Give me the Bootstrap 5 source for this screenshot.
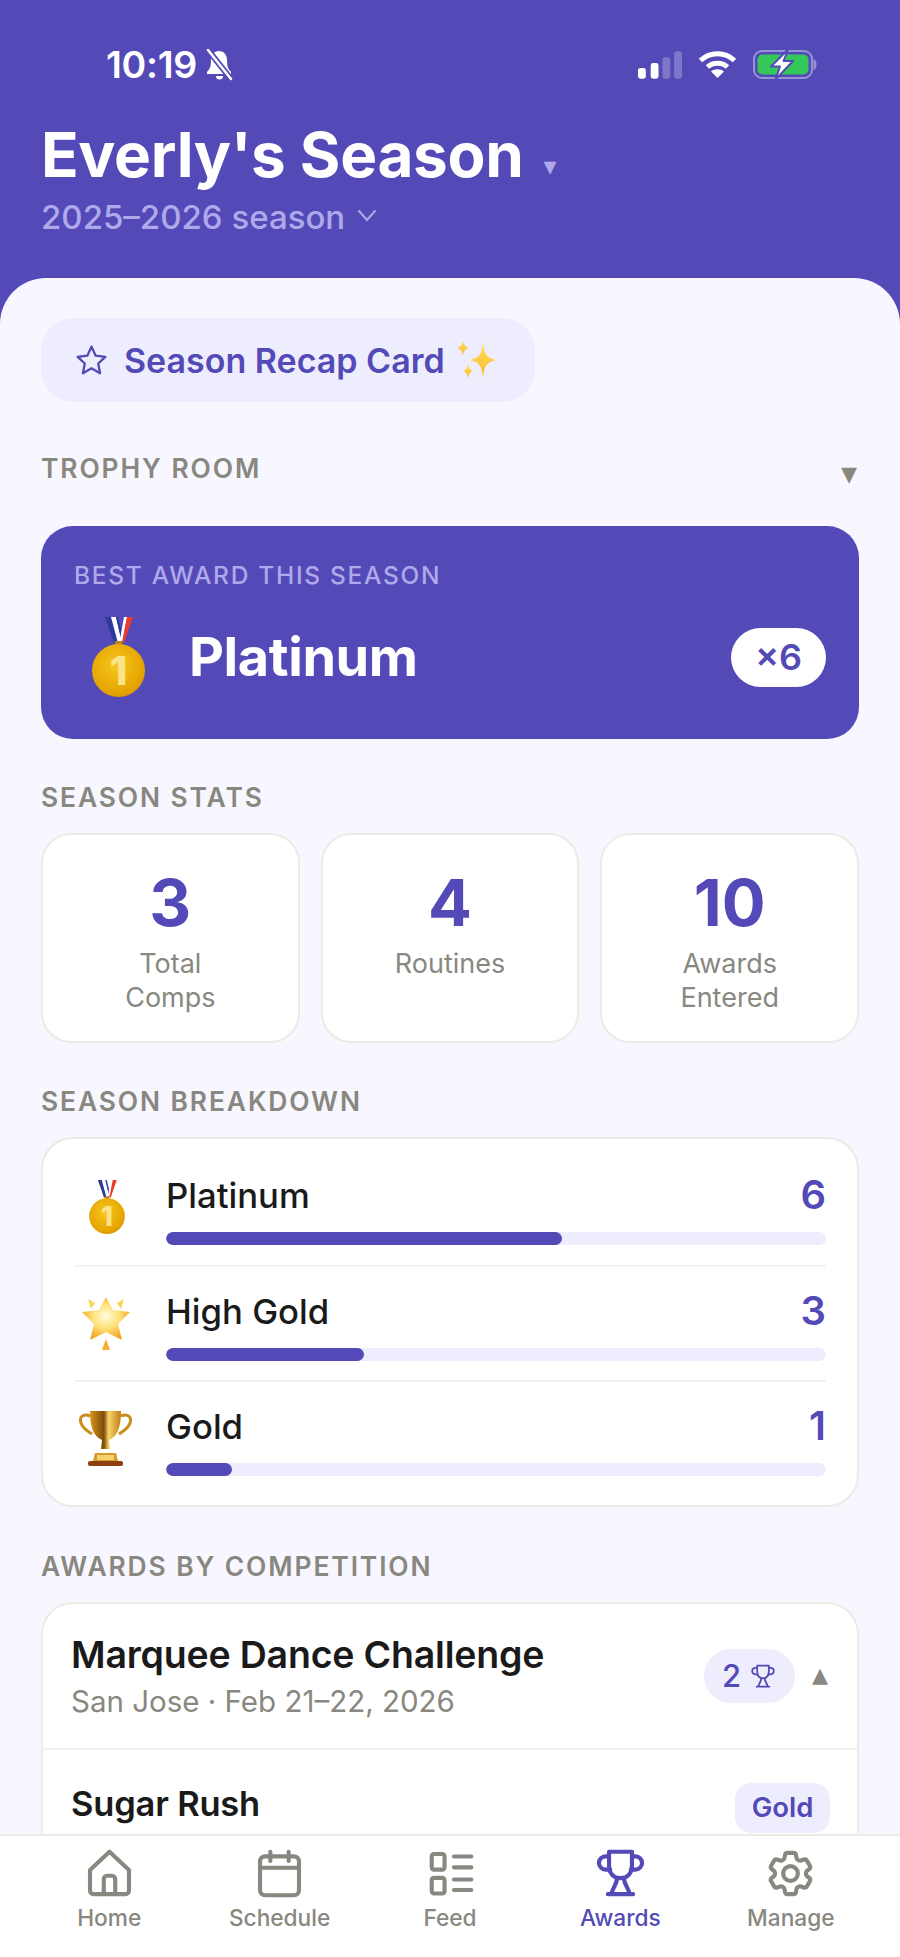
<!DOCTYPE html>
<html lang="en">
<head>
    <meta charset="UTF-8">
    <meta name="viewport" content="width=device-width, initial-scale=1">
    <title>Everly's Season</title>
    <link href="https://cdn.jsdelivr.net/npm/bootstrap@5.3.0/dist/css/bootstrap.min.css" rel="stylesheet">
    <style>
        body { font-family: Inter, "Liberation Sans", sans-serif; background: #534ab7; color: #1a1a1a; }
        .app-shell { height: 1957px; background: #534ab7; }

        .status-row { height: 53px; margin-top: 38px; padding: 0 83px 0 106px; color: #fff; }
        .status-time { font-size: 37.5px; font-weight: 600; line-height: 30px; letter-spacing: -.3px; }
        .hero-head { padding: 28px 41px 0; height: 187px; }
        .hero-title { font-size: 62px; font-weight: 700; line-height: 72px; letter-spacing: -.3px; color: #fff; margin: 0; }
        .title-caret { font-family: "DejaVu Sans", sans-serif; font-size: 26px; color: #afa9ec; margin-left: 20px; letter-spacing: 0; vertical-align: 2px; }
        .hero-season { font-size: 33px; font-weight: 500; line-height: 36px; color: #afa9ec; margin-top: -3px; }
        .season-chev { margin: 0 0 5px 12px; }

        .sheet { background: #f8f7ff; border-radius: 46px 46px 0 0; padding: 40px 41px 0; height: 1679px; }
        .recap-btn { background: #eeedfe; color: #534ab7; border: 0; border-radius: 32px; height: 84px; width: 494px; padding: 0 0 0 32px; font-size: 34px; font-weight: 600; }
        .recap-text { margin: 0 12px 0 14px; }
        .sec-label { font-size: 26.4px; font-weight: 600; letter-spacing: 1.9px; color: #888780; line-height: 30px; text-transform: uppercase; }
        .sec-caret { font-family: "DejaVu Sans", sans-serif; font-size: 32px; line-height: 30px; color: #888780; margin: 10px 2px 0 0; }
        .trophy-head { margin-top: 51px; height: 30px; }

        .best-card { background: #534ab7; color: #fff; border: 0; border-radius: 32px; height: 213px; margin-top: 43px; padding: 34px 33px 0; }
        .best-label { font-size: 24.5px; font-weight: 500; letter-spacing: 1.7px; line-height: 30px; color: #afa9ec; }
        .best-row { margin-top: 27px; }
        .best-medal { margin: 0 44px 0 18px; }
        .best-name { font-size: 54px; font-weight: 700; line-height: 64px; letter-spacing: -.4px; }
        .best-count { background: #fff; color: #534ab7; border-radius: 30px; width: 95px; height: 59px; font-size: 36px; font-weight: 600; }

        .stat-tile { background: #fff; border: 2px solid #ecebe5; border-radius: 30px; height: 210px; padding-top: 28px; }
        .stat-num { font-size: 65px; font-weight: 700; line-height: 80px; margin-bottom: 4px; color: #534ab7; }
        .stat-cap { font-size: 27px; line-height: 34px; color: #888780; }
        .stat-grid { gap: 21px; margin-top: 21px; }

        .panel-box { background: #fff; border: 2px solid #ecebe5; border-radius: 32px; }
        .breakdown-box { height: 370px; margin-top: 21px; padding: 0 31px; }
        .award-row { height: 115px; gap: 0; }
        .award-row + .award-row { border-top: 2px solid #f3f2ed; }
        .award-icon { width: 92px; }
        .award-body { padding-top: 4px; }
        .award-name { font-size: 34.7px; font-weight: 500; line-height: 42px; }
        .award-num { font-size: 40px; font-weight: 600; line-height: 42px; color: #534ab7; }
        .award-track { height: 13px; background: #eeedfe; border-radius: 7px; margin-top: 16px; }
        .award-track .progress-bar { background: #534ab7; border-radius: 7px; }

        .comp-box { margin-top: 21px; height: 400px; border-bottom: 0; border-radius: 32px 32px 0 0; }
        .comp-head { height: 146px; padding: 0 27px 0 28px; border-bottom: 2px solid #f3f2ed; }
        .comp-title { font-size: 37.5px; font-weight: 600; line-height: 44px; letter-spacing: -.2px; }
        .comp-sub { font-size: 29.5px; line-height: 36px; margin-top: 6px; color: #888780; }
        .comp-pill { background: #eeedfe; color: #534ab7; width: 91px; height: 54px; border-radius: 27px; font-size: 31px; font-weight: 500; gap: 8px; }
        .comp-caret { font-family: "DejaVu Sans", sans-serif; font-size: 32px; line-height: 36px; color: #888780; margin: 0 2px 4px 17px; }
        .routine-row { padding: 33px 27px 0 28px; }
        .routine-name { font-size: 34.5px; font-weight: 600; line-height: 50px; letter-spacing: -.2px; margin-top: -4px; }
        .routine-tag { background: #eeedfe; color: #534ab7; border-radius: 16px; width: 95px; height: 50px; font-size: 27.5px; font-weight: 600; }

        .tab-strip { bottom: 0; left: 0; height: 123px; background: #fff; border-top: 2px solid #ecebe5; padding: 10px 24px 0; }
        .tab-cell { color: #888780; font-size: 22.7px; font-weight: 500; line-height: 28px; }
        .tab-cell.is-on { color: #534ab7; }
        .tab-cell svg { width: 55px; height: 55px; margin-bottom: 3px; }
        .ln { fill: none; stroke: currentColor; stroke-width: 1.8; stroke-linecap: round; stroke-linejoin: round; }
    </style>
</head>
<body>

<div class="app-shell position-relative overflow-hidden">

    <div class="status-row d-flex justify-content-between align-items-center">
        <div class="d-flex align-items-center gap-2">
            <span class="status-time">10:19</span>
            <svg width="29" height="32" viewBox="0 0 29 32">
                <path d="M14 2c-5 0-8 4-8 9 0 6-1 9-4 12v2h24v-2c-3-3-4-6-4-12 0-5-3-9-8-9z" fill="#fff"/>
                <path d="M11 27h7a3.5 3.5 0 0 1-7 0z" fill="#fff"/>
                <path d="M3 1l23 29" stroke="#534ab7" stroke-width="6"/>
                <path d="M3 1l23 29" stroke="#fff" stroke-width="2.5" stroke-linecap="round"/>
            </svg>
        </div>
        <div class="d-flex align-items-center">
            <svg width="44" height="28" viewBox="0 0 45 28" fill="#fff">
                <rect x="0" y="17" width="8" height="11" rx="2.5"/>
                <rect x="13" y="12" width="8" height="16" rx="2.5"/>
                <rect x="25" y="6" width="8" height="22" rx="2.5" opacity=".25"/>
                <rect x="37" y="0" width="8" height="28" rx="2.5" opacity=".25"/>
            </svg>
            <svg class="ms-3" width="39" height="29" viewBox="0 0 39 29" fill="none" stroke="#fff" stroke-width="5">
                <path d="M2.5 10.5c9.5-9 24.500-9 34 0"/>
                <path d="M9.500 17c5.500-5 14.500-5 20 0"/>
                <path d="M19.500 28l-6.500-6.500c3.500-3 9.500-3 13 0z" fill="#fff" stroke="none"/>
            </svg>
            <svg class="ms-3" width="64" height="31" viewBox="0 0 64 31">
                <rect x="1" y="2" width="58" height="27" rx="8" fill="none" stroke="#fff" stroke-opacity=".4" stroke-width="2"/>
                <rect x="4.500" y="5.500" width="51" height="20" rx="5" fill="#34c759"/>
                <path d="M60.500 10c2 1 3 2.500 3 5.500s-1 4.500-3 5.500z" fill="#fff" fill-opacity=".4"/>
                <path d="M35 .5L18 17.500h9L22.500 30.500 40 12H30.500z" fill="#fff" stroke="#534ab7" stroke-width="2" stroke-linejoin="round"/>
            </svg>
        </div>
    </div>

    <div class="hero-head">
        <h1 class="hero-title">Everly's Season<span class="title-caret">▾</span></h1>
        <div class="hero-season d-flex align-items-center">2025–2026 season
            <svg class="season-chev" width="20" height="14" viewBox="0 0 20 14" fill="none" stroke="#afa9ec" stroke-width="2" stroke-linecap="round"><path d="M2 3l8 9 8-9"/></svg>
        </div>
    </div>

    <div class="sheet">
        <button type="button" class="recap-btn btn d-flex align-items-center">
            <svg width="37" height="37" viewBox="0 0 16 16" fill="none" stroke="#534ab7" stroke-width="1" stroke-linejoin="round"><path d="M8 2l1.800 3.900 4.200.5-3.100 2.900.8 4.200L8 11.400l-3.700 2.100.8-4.200L2 6.400l4.200-.5z"/></svg>
            <span class="recap-text">Season Recap Card</span>
            <svg width="40" height="40" viewBox="0 0 40 40">
                <defs><linearGradient id="spk" x1="0" y1="0" x2="0" y2="1"><stop offset="0" stop-color="#ffe25a"/><stop offset="1" stop-color="#fcb72b"/></linearGradient></defs>
                <path d="M26 2c1 11 3 16 13 18-10 2-12 7-13 18-1-11-3-16-13-18 10-2 12-7 13-18z" fill="url(#spk)"/>
                <path d="M6 0c.5 4 1.500 6 5.500 8-4 2-5 4-5.500 8-.5-4-1.500-6-5.500-8 4-2 5-4 5.500-8z" fill="url(#spk)"/>
                <path d="M11 24c.4 3 1.200 5 4.500 7-3.300 2-4.100 4-4.500 8-.4-4-1.200-6-4.500-8 3.300-2 4.100-4 4.500-7z" fill="url(#spk)"/>
            </svg>
        </button>

        <div class="trophy-head d-flex justify-content-between align-items-center">
            <span class="sec-label">Trophy Room</span>
            <span class="sec-caret">▾</span>
        </div>

        <div class="best-card card">
            <div class="best-label">BEST AWARD THIS SEASON</div>
            <div class="best-row d-flex align-items-center">
                <svg class="best-medal" width="53" height="80" viewBox="0 0 53 80">
                    <defs>
                        <radialGradient id="gold1" cx=".45" cy=".4" r=".7"><stop offset="0" stop-color="#f7c81e"/><stop offset=".75" stop-color="#e5a400"/><stop offset="1" stop-color="#c88a00"/></radialGradient>
                    </defs>
                    <path d="M13 0h6l7 26h-4z" fill="#2b3a9b"/>
                    <path d="M19 0h5l6 26h-4z" fill="#fff"/>
                    <path d="M24 0h2l5 20-1 6z" fill="#2b3a9b"/>
                    <path d="M32 0h3l-5 26-2-4z" fill="#fff"/>
                    <path d="M35 0h6l-9 26h-2z" fill="#ea3b2e"/>
                    <rect x="23" y="24" width="7" height="5" fill="#b98a20"/>
                    <circle cx="26.500" cy="53.500" r="26.500" fill="url(#gold1)"/>
                    <text x="26.500" y="68" text-anchor="middle" font-family="Inter" font-weight="800" font-size="40" fill="#fbe38a">1</text>
                </svg>
                <span class="best-name flex-grow-1">Platinum</span>
                <span class="best-count d-flex align-items-center justify-content-center">×6</span>
            </div>
        </div>

        <div class="sec-label" style="margin-top:43px">Season Stats</div>
        <div class="stat-grid d-flex">
            <div class="stat-tile flex-fill w-100 text-center"><div class="stat-num">3</div><div class="stat-cap">Total<br>Comps</div></div>
            <div class="stat-tile flex-fill w-100 text-center"><div class="stat-num">4</div><div class="stat-cap">Routines</div></div>
            <div class="stat-tile flex-fill w-100 text-center"><div class="stat-num">10</div><div class="stat-cap">Awards<br>Entered</div></div>
        </div>

        <div class="sec-label" style="margin-top:43px">Season Breakdown</div>
        <div class="breakdown-box panel-box d-flex flex-column justify-content-center">
            <div class="award-row d-flex align-items-center">
                <div class="award-icon">
                    <svg class="d-block" style="margin-left:15px" width="36" height="54" viewBox="0 0 53 80">
                        <path d="M13 0h6l7 26h-4z" fill="#2b3a9b"/>
                        <path d="M19 0h5l6 26h-4z" fill="#fff"/>
                        <path d="M24 0h2l5 20-1 6z" fill="#2b3a9b"/>
                        <path d="M32 0h3l-5 26-2-4z" fill="#fff"/>
                        <path d="M35 0h6l-9 26h-2z" fill="#ea3b2e"/>
                        <rect x="23" y="24" width="7" height="5" fill="#b98a20"/>
                        <circle cx="26.500" cy="53.500" r="26.500" fill="url(#gold1)"/>
                        <text x="26.500" y="68" text-anchor="middle" font-family="Inter" font-weight="800" font-size="40" fill="#fbe38a">1</text>
                    </svg>
                </div>
                <div class="award-body flex-grow-1">
                    <div class="d-flex justify-content-between"><span class="award-name">Platinum</span><span class="award-num">6</span></div>
                    <div class="award-track progress"><div class="progress-bar" style="width:60%"></div></div>
                </div>
            </div>
            <div class="award-row d-flex align-items-center">
                <div class="award-icon">
                    <svg class="d-block" style="margin-left:7px" width="50" height="53" viewBox="0 0 50 53">
                        <defs><radialGradient id="star1" cx=".5" cy=".45" r=".55"><stop offset="0" stop-color="#fffbe0"/><stop offset=".5" stop-color="#ffe27a"/><stop offset="1" stop-color="#f2a51f"/></radialGradient></defs>
                        <path d="M25 0l7 13 17 2-12 12 4 16-16-8-16 8 4-16L1 15l17-2z" fill="url(#star1)" stroke-linejoin="round"/>
                        <path d="M7 2l7 4-4 6zM43 2l-7 4 4 6z" fill="#f9d653"/>
                        <path d="M25 42l4 11h-8z" fill="#f4ad2e"/>
                    </svg>
                </div>
                <div class="award-body flex-grow-1">
                    <div class="d-flex justify-content-between"><span class="award-name">High Gold</span><span class="award-num">3</span></div>
                    <div class="award-track progress"><div class="progress-bar" style="width:30%"></div></div>
                </div>
            </div>
            <div class="award-row d-flex align-items-center">
                <div class="award-icon">
                    <svg class="d-block" style="margin-left:5px" width="53" height="57" viewBox="0 0 53 57">
                        <defs><linearGradient id="cup1" x1="0" y1="0" x2="1" y2="0"><stop offset="0" stop-color="#d9961a"/><stop offset=".45" stop-color="#7d4a08"/><stop offset=".6" stop-color="#f7d46a"/><stop offset="1" stop-color="#c07f12"/></linearGradient></defs>
                        <path d="M11 6C4 3 0 7 2 13s7 8 11 11M42 6c7-3 11 1 9 7s-7 8-11 11" fill="none" stroke="#c98d1b" stroke-width="3"/>
                        <path d="M11 1h31c0 15-3 25-12 29l1 9h-9l1-9C14 26 11 16 11 1z" fill="url(#cup1)"/>
                        <path d="M16 43h21l2 8H14z" fill="#d59a28"/>
                        <rect x="18" y="45" width="17" height="5" fill="#f3d36e"/>
                        <rect x="9" y="51" width="35" height="5" rx="2" fill="#8c3f10"/>
                    </svg>
                </div>
                <div class="award-body flex-grow-1">
                    <div class="d-flex justify-content-between"><span class="award-name">Gold</span><span class="award-num">1</span></div>
                    <div class="award-track progress"><div class="progress-bar" style="width:10%"></div></div>
                </div>
            </div>
        </div>

        <div class="sec-label" style="margin-top:44px">Awards by Competition</div>
        <div class="comp-box panel-box">
            <div class="comp-head d-flex align-items-center justify-content-between">
                <div>
                    <div class="comp-title">Marquee Dance Challenge</div>
                    <div class="comp-sub">San Jose · Feb 21–22, 2026</div>
                </div>
                <div class="d-flex align-items-center">
                    <span class="comp-pill d-flex align-items-center justify-content-center">2
                        <svg width="28" height="28" viewBox="0 0 24 24" class="ln" style="stroke-width:1.500"><path d="M7 3h10v5c0 4-2 6-5 6s-5-2-5-6z"/><path d="M7 5H5.500a2 2 0 0 0 0 5.500H7.500M17 5h1.500a2 2 0 0 1 0 5.500H16.500"/><path d="M10.500 14c0 3-2 4-2.500 7M13.500 14c0 3 2 4 2.500 7M6.500 21h11"/></svg>
                    </span>
                    <span class="comp-caret">▴</span>
                </div>
            </div>
            <div class="routine-row d-flex align-items-start justify-content-between">
                <span class="routine-name">Sugar Rush</span>
                <span class="routine-tag d-flex align-items-center justify-content-center">Gold</span>
            </div>
        </div>
    </div>

    <nav class="tab-strip position-absolute w-100 d-flex">
        <div class="tab-cell flex-fill w-100 text-center">
            <svg class="d-block mx-auto ln" viewBox="0 0 24 24"><path d="M3.500 10.500L12 2.500l8.500 8v9a1.500 1.500 0 0 1-1.500 1.500H5a1.500 1.500 0 0 1-1.500-1.500z"/><path d="M9.500 21v-6.500a1.500 1.500 0 0 1 1.500-1.500h2a1.500 1.500 0 0 1 1.500 1.500V21"/></svg>
            Home
        </div>
        <div class="tab-cell flex-fill w-100 text-center">
            <svg class="d-block mx-auto ln" viewBox="0 0 24 24"><rect x="3.500" y="4.500" width="17" height="17" rx="2.200"/><path d="M3.500 9.500h17M8 2.500v4M16 2.500v4"/></svg>
            Schedule
        </div>
        <div class="tab-cell flex-fill w-100 text-center">
            <svg class="d-block mx-auto ln" viewBox="0 0 24 24"><rect x="3.800" y="3.500" width="5.600" height="6.800" rx="1"/><rect x="3.800" y="13.900" width="5.600" height="6.800" rx="1"/><path d="M13.500 4.600h7.600M13.500 9.300h7.600M13.500 14.600h7.600M13.500 19.200h7.600"/></svg>
            Feed
        </div>
        <div class="tab-cell is-on flex-fill w-100 text-center">
            <svg class="d-block mx-auto ln" viewBox="0 0 24 24"><path d="M7 2.500h10v6c0 3.500-2 5.500-5 5.500s-5-2-5-5.500z"/><path d="M7 4.500H5.500a2.300 2.300 0 0 0 0 5.800h2M17 4.500h1.500a2.300 2.300 0 0 1 0 5.800h-2"/><path d="M10.500 14c0 3-2 4-2.500 7M13.500 14c0 3 2 4 2.500 7M6.500 21h11"/></svg>
            Awards
        </div>
        <div class="tab-cell flex-fill w-100 text-center">
            <svg class="d-block mx-auto ln" viewBox="0 0 24 24"><path d="M9.594 3.940c.09-.542.56-.94 1.110-.94h2.593c.55 0 1.020.398 1.110.94l.213 1.281c.063.374.313.686.645.870.074.040.147.083.22.127.325.196.72.257 1.075.124l1.217-.456a1.125 1.125 0 0 1 1.370.49l1.296 2.247a1.125 1.125 0 0 1-.26 1.431l-1.003.827c-.293.241-.438.613-.43.992a7.723 7.723 0 0 1 0 .255c-.008.378.137.75.43.991l1.004.827c.424.35.534.955.26 1.430l-1.298 2.247a1.125 1.125 0 0 1-1.369.491l-1.217-.456c-.355-.133-.75-.072-1.076.124a6.470 6.470 0 0 1-.22.128c-.331.183-.581.495-.644.869l-.213 1.281c-.09.543-.56.94-1.110.94h-2.594c-.55 0-1.019-.398-1.110-.94l-.213-1.281c-.062-.374-.312-.686-.644-.87a6.520 6.520 0 0 1-.22-.127c-.325-.196-.72-.257-1.076-.124l-1.217.456a1.125 1.125 0 0 1-1.369-.49l-1.297-2.247a1.125 1.125 0 0 1 .26-1.431l1.004-.827c.292-.24.437-.613.43-.991a6.932 6.932 0 0 1 0-.255c.007-.38-.138-.751-.43-.992l-1.004-.827a1.125 1.125 0 0 1-.26-1.430l1.297-2.247a1.125 1.125 0 0 1 1.370-.491l1.216.456c.356.133.751.072 1.076-.124.072-.044.146-.086.22-.128.332-.183.582-.495.644-.869l.214-1.280z"/><circle cx="12" cy="12" r="3.200"/></svg>
            Manage
        </div>
    </nav>
</div>

<script src="https://cdn.jsdelivr.net/npm/bootstrap@5.3.0/dist/js/bootstrap.bundle.min.js"></script>
</body>
</html>
